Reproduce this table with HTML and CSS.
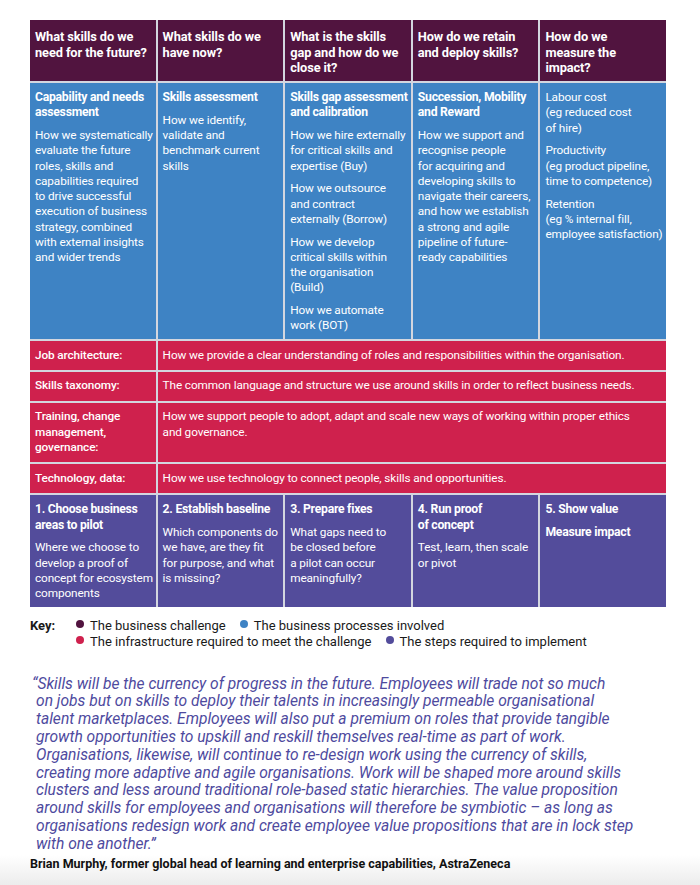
FILE: index.html
```html
<!DOCTYPE html>
<html lang="en">
<head>
<meta charset="utf-8">
<title>Skills ecosystem</title>
<link rel="stylesheet" href="styles.css">
</head>
<body>
<div class="page">
  <div class="matrix">
    <div class="cell head">What skills do we<br>need for the future?</div>
    <div class="cell head">What skills do we<br>have now?</div>
    <div class="cell head">What is the skills<br>gap and how do we<br>close it?</div>
    <div class="cell head">How do we retain<br>and deploy skills?</div>
    <div class="cell head">How do we<br>measure the<br>impact?</div>

    <div class="cell blue">
      <p class="h">Capability and needs<br>assessment</p>
      <p>How we systematically<br>evaluate the future<br>roles, skills and<br>capabilities required<br>to drive successful<br>execution of business<br>strategy, combined<br>with external insights<br>and wider trends</p>
    </div>
    <div class="cell blue">
      <p class="h">Skills assessment</p>
      <p>How we identify,<br>validate and<br>benchmark current<br>skills</p>
    </div>
    <div class="cell blue">
      <p class="h">Skills gap assessment<br>and calibration</p>
      <p>How we hire externally<br>for critical skills and<br>expertise (Buy)</p>
      <p>How we outsource<br>and contract<br>externally (Borrow)</p>
      <p>How we develop<br>critical skills within<br>the organisation<br>(Build)</p>
      <p>How we automate<br>work (BOT)</p>
    </div>
    <div class="cell blue">
      <p class="h">Succession, Mobility<br>and Reward</p>
      <p>How we support and<br>recognise people<br>for acquiring and<br>developing skills to<br>navigate their careers,<br>and how we establish<br>a strong and agile<br>pipeline of future-<br>ready capabilities</p>
    </div>
    <div class="cell blue">
      <p>Labour cost<br>(eg reduced cost<br>of hire)</p>
      <p>Productivity<br>(eg product pipeline,<br>time to competence)</p>
      <p>Retention<br>(eg % internal fill,<br>employee satisfaction)</p>
    </div>

    <div class="cell red label">Job architecture:</div>
    <div class="cell red wide">How we provide a clear understanding of roles and responsibilities within the organisation.</div>
    <div class="cell red label">Skills taxonomy:</div>
    <div class="cell red wide">The common language and structure we use around skills in order to reflect business needs.</div>
    <div class="cell red label">Training, change<br>management,<br>governance:</div>
    <div class="cell red wide">How we support people to adopt, adapt and scale new ways of working within proper ethics<br>and governance.</div>
    <div class="cell red label">Technology, data:</div>
    <div class="cell red wide">How we use technology to connect people, skills and opportunities.</div>

    <div class="cell purple">
      <p class="h">1. Choose business<br>areas to pilot</p>
      <p>Where we choose to<br>develop a proof of<br>concept for ecosystem<br>components</p>
    </div>
    <div class="cell purple">
      <p class="h">2. Establish baseline</p>
      <p>Which components do<br>we have, are they fit<br>for purpose, and what<br>is missing?</p>
    </div>
    <div class="cell purple">
      <p class="h">3. Prepare fixes</p>
      <p>What gaps need to<br>be closed before<br>a pilot can occur<br>meaningfully?</p>
    </div>
    <div class="cell purple">
      <p class="h">4. Run proof<br>of concept</p>
      <p>Test, learn, then scale<br>or pivot</p>
    </div>
    <div class="cell purple">
      <p class="h">5. Show value</p>
      <p class="h">Measure impact</p>
    </div>
  </div>

  <div class="key">
    <div class="key-label">Key:</div>
    <div class="key-rows">
      <div class="key-row">
        <span class="key-item"><span class="dot dot-challenge"></span>The business challenge</span>
        <span class="key-item"><span class="dot dot-process"></span>The business processes involved</span>
      </div>
      <div class="key-row">
        <span class="key-item"><span class="dot dot-infra"></span>The infrastructure required to meet the challenge</span>
        <span class="key-item"><span class="dot dot-steps"></span>The steps required to implement</span>
      </div>
    </div>
  </div>

  <blockquote class="quote">“Skills will be the currency of progress in the future. Employees will trade not so much<br>on jobs but on skills to deploy their talents in increasingly permeable organisational<br>talent marketplaces. Employees will also put a premium on roles that provide tangible<br>growth opportunities to upskill and reskill themselves real-time as part of work.<br>Organisations, likewise, will continue to re-design work using the currency of skills,<br>creating more adaptive and agile organisations. Work will be shaped more around skills<br>clusters and less around traditional role-based static hierarchies. The value proposition<br>around skills for employees and organisations will therefore be symbiotic – as long as<br>organisations redesign work and create employee value propositions that are in lock step<br>with one another.”</blockquote>
</div>
<div class="band">
  <p class="attribution">Brian Murphy, former global head of learning and enterprise capabilities, AstraZeneca</p>
</div>
</body>
</html>
```

FILE: styles.css
```css
html, body {
  margin: 0;
  padding: 0;
  background: #ffffff;
}

body {
  font-family: Roboto, "Liberation Sans", Arial, sans-serif;
  color: #1a1a1a;
}

.page {
  padding: 20px 0 0 30px;
}

.matrix {
  width: 636px;
  display: grid;
  grid-template-columns: repeat(5, 1fr);
  gap: 2px;
  background: #d3d6df;
}

.cell {
  color: #ffffff;
  font-size: 11.8px;
  letter-spacing: -0.12px;
  line-height: 15.3px;
  padding: 7.5px 2px 5px 5px;
  white-space: nowrap;
}

.cell p {
  margin: 0;
}

.cell p + p {
  margin-top: 7.4px;
}

.cell .h {
  font-weight: 700;
  font-size: 12.2px;
  letter-spacing: -0.25px;
}

.head {
  background: #51143f;
  font-weight: 700;
  font-size: 12.8px;
  letter-spacing: -0.1px;
  line-height: 15.5px;
  padding: 9px 2px 5px 5px;
}

.blue {
  background: #3e83c4;
}

.red {
  background: #cf214d;
  padding: 6.8px 2px 6.8px 5px;
}

.red.label {
  font-weight: 500;
}

.red.wide {
  grid-column: span 4;
}

.purple {
  background: #534c9b;
}

.key {
  display: flex;
  margin-top: 11px;
  font-size: 13px;
  line-height: 16px;
  color: #1a1a1a;
}

.key-label {
  width: 46px;
  font-weight: 700;
}

.key-row {
  display: flex;
  gap: 14px;
}

.key-item {
  display: inline-flex;
  align-items: center;
  gap: 6px;
}

.dot {
  width: 8px;
  height: 8px;
  border-radius: 50%;
  display: inline-block;
  position: relative;
  top: -2px;
}

.dot-challenge { background: #51143f; }
.dot-process { background: #3e83c4; }
.dot-infra { background: #cf214d; }
.dot-steps { background: #534c9b; }

.quote {
  margin: 26px 0 0 0;
  padding-left: 6px;
  text-indent: -4px;
  font-style: italic;
  font-size: 15.6px;
  line-height: 17.8px;
  color: #4e4a9e;
  white-space: nowrap;
}

.band {
  margin-top: 1px;
  height: 30px;
  background: linear-gradient(#ffffff, #ececec);
}

.attribution {
  margin: 0;
  padding: 1px 0 0 30px;
  font-weight: 700;
  font-size: 12.5px;
  line-height: 16px;
  color: #111111;
}
```
